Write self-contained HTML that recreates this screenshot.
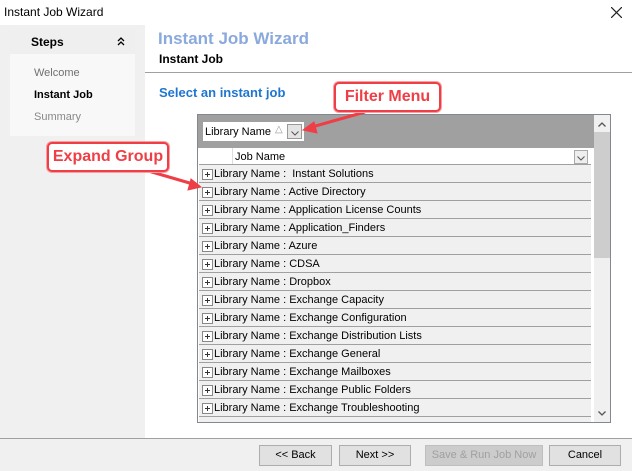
<!DOCTYPE html>
<html><head><style>
*{margin:0;padding:0;box-sizing:border-box}
body{width:632px;height:471px;position:relative;background:#fff;font-family:"Liberation Sans",sans-serif;font-size:11px;overflow:hidden;color:#000}
.a{position:absolute}
.btn{position:absolute;top:445px;height:21px;border:1px solid #adadad;background:#e1e1e1;font-size:11px;text-align:center;line-height:19px}
.row{position:absolute;left:199px;width:392px;height:18px;background:#f0f0f0;border-bottom:1px solid #a0a0a0;line-height:19px;padding-left:15px;white-space:nowrap}
.row:before{content:"";position:absolute;left:3px;top:4px;width:9px;height:9px;border:1px solid #888;background:linear-gradient(#333,#333) center/5px 1px no-repeat,linear-gradient(#333,#333) center/1px 5px no-repeat,#fff}
.call{position:absolute;border:2px solid #ef3e46;border-radius:5px;background:#fff;color:#ef3e46;font-weight:bold;font-size:16px;text-align:center;box-shadow:0 0 0 1px #f7a0a4}
</style></head><body>
<div class="a" style="left:4px;top:5px;font-size:12px">Instant Job Wizard</div>
<svg class="a" style="left:611px;top:7px" width="11" height="11"><path d="M0 0L11 11M11 0L0 11" stroke="#222" stroke-width="1.2"/></svg>
<div class="a" style="left:0;top:25px;width:145px;height:413px;background:#f0f0f0"></div>
<div class="a" style="left:10px;top:30px;width:125px;height:24px;background:#efefef"></div>
<div class="a" style="left:31px;top:35px;font-weight:bold;font-size:12px">Steps</div>
<svg class="a" style="left:117px;top:37px" width="8" height="9"><path d="M1 4L4 1L7 4M1 8L4 5L7 8" stroke="#000" stroke-width="1.3" fill="none"/></svg>
<div class="a" style="left:10px;top:54px;width:125px;height:82px;background:#f8f8f8"></div>
<div class="a" style="left:34px;top:67px;color:#707070">Welcome</div>
<div class="a" style="left:34px;top:89px;font-weight:bold">Instant Job</div>
<div class="a" style="left:34px;top:111px;color:#888">Summary</div>
<div class="a" style="left:158px;top:29px;font-size:17px;font-weight:bold;color:#8aa9dc">Instant Job Wizard</div>
<div class="a" style="left:159px;top:52px;font-size:12px;font-weight:bold">Instant Job</div>
<div class="a" style="left:145px;top:72px;width:487px;height:1px;background:#a0a0a0"></div>
<div class="a" style="left:159px;top:85px;font-size:13px;font-weight:bold;color:#1f76d0">Select an instant job</div>
<div class="a" style="left:197px;top:114px;width:414px;height:309px;border:1px solid #828790;background:#fff"></div>
<div class="a" style="left:198px;top:115px;width:396px;height:33px;background:#a0a0a0"></div>
<div class="a" style="left:203px;top:122px;width:101px;height:19px;background:#fff;line-height:20px;padding-left:2px">Library Name</div>
<div class="a" style="left:275px;top:124px;color:#999;font-size:10px">△</div>
<div class="a" style="left:287px;top:124px;width:15px;height:15px;border:1px solid #999;background:#e4e4e4"></div>
<svg class="a" style="left:291px;top:131px" width="8" height="5"><path d="M0.5 0.5L4 4L7.5 0.5" stroke="#555" fill="none"/></svg>
<div class="a" style="left:232px;top:148px;width:1px;height:17px;background:#ddd"></div>
<div class="a" style="left:235px;top:151px">Job Name</div>
<div class="a" style="left:574px;top:150px;width:14px;height:14px;border:1px solid #aaa;background:#eee"></div>
<svg class="a" style="left:577px;top:156px" width="8" height="5"><path d="M0.5 0.5L4 4L7.5 0.5" stroke="#555" fill="none"/></svg>
<div class="a" style="left:199px;top:164px;width:392px;height:1px;background:#a0a0a0"></div>
<div class="row" style="top:165px">Library Name :&nbsp; Instant Solutions</div>
<div class="row" style="top:183px">Library Name : Active Directory</div>
<div class="row" style="top:201px">Library Name : Application License Counts</div>
<div class="row" style="top:219px">Library Name : Application_Finders</div>
<div class="row" style="top:237px">Library Name : Azure</div>
<div class="row" style="top:255px">Library Name : CDSA</div>
<div class="row" style="top:273px">Library Name : Dropbox</div>
<div class="row" style="top:291px">Library Name : Exchange Capacity</div>
<div class="row" style="top:309px">Library Name : Exchange Configuration</div>
<div class="row" style="top:327px">Library Name : Exchange Distribution Lists</div>
<div class="row" style="top:345px">Library Name : Exchange General</div>
<div class="row" style="top:363px">Library Name : Exchange Mailboxes</div>
<div class="row" style="top:381px">Library Name : Exchange Public Folders</div>
<div class="row" style="top:399px">Library Name : Exchange Troubleshooting</div>
<div class="a" style="left:199px;top:417px;width:392px;height:5px;background:#f0f0f0"></div>
<div class="a" style="left:594px;top:115px;width:16px;height:307px;background:#f0f0f0"></div>
<div class="a" style="left:594px;top:132px;width:16px;height:126px;background:#cdcdcd"></div>
<svg class="a" style="left:598px;top:122px" width="8" height="5"><path d="M0.5 4.5L4 1L7.5 4.5" stroke="#555" stroke-width="1.3" fill="none"/></svg>
<svg class="a" style="left:598px;top:411px" width="8" height="5"><path d="M0.5 0.5L4 4L7.5 0.5" stroke="#555" stroke-width="1.3" fill="none"/></svg>
<div class="a" style="left:0;top:438px;width:632px;height:33px;background:#f0f0f0;border-top:1px solid #a0a0a0"></div>
<div class="btn" style="left:259px;width:73px">&lt;&lt; Back</div>
<div class="btn" style="left:339px;width:72px">Next &gt;&gt;</div>
<div class="btn" style="left:425px;width:118px;color:#a0a0a0;border-color:#bfbfbf;background:#ccc">Save &amp; Run Job Now</div>
<div class="btn" style="left:549px;width:72px">Cancel</div>
<svg class="a" style="left:0;top:0" width="632" height="471">
<g stroke="#ef3e46" stroke-width="3" fill="#ef3e46">
<line x1="365" y1="112" x2="312" y2="127"/>
<polygon points="303,130 314,122 317,133" stroke-width="1"/>
<line x1="145" y1="170" x2="193" y2="184"/>
<polygon points="201,187 191,179 188,190" stroke-width="1"/>
</g></svg>
<div class="call" style="left:334px;top:82px;width:107px;height:30px;line-height:26px">Filter Menu</div>
<div class="call" style="left:47px;top:142px;width:122px;height:30px;line-height:26px">Expand Group</div>
</body></html>
